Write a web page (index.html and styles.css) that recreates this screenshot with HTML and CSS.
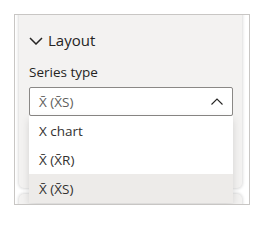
FILE: index.html
```html
<!DOCTYPE html>
<html lang="en">
<head>
    <meta charset="UTF-8">
    <meta name="viewport" content="width=device-width, initial-scale=1.0">
    <title>Format pane</title>
    <link rel="stylesheet" href="styles.css">
</head>
<body>

    <div class="frame">
        <div class="card">
            <div class="card-head">
                <svg class="chev-down" width="14" height="8" viewBox="0 0 14 8">
                    <path d="M1 1 L7 7 L13 1" fill="none" stroke="#252423" stroke-width="1.5"/>
                </svg>
                <span class="title">Layout</span>
            </div>
            <div class="label">Series type</div>
            <div class="select">
                <div class="select-box">
                    <span class="value">X&#772; (X&#772;S)</span>
                    <svg class="chev-up" width="12" height="7" viewBox="0 0 12 7">
                        <path d="M0.5 6.5 L6 1 L11.5 6.5" fill="none" stroke="#252423" stroke-width="1.1"/>
                    </svg>
                </div>
                <div class="options">
                    <div class="option">X chart</div>
                    <div class="option">X&#772; (X&#772;R)</div>
                    <div class="option selected">X&#772; (X&#772;S)</div>
                </div>
            </div>
        </div>
        <div class="card next"></div>
    </div>

</body>
</html>
```
FILE: styles.css
```css
body {
    margin: 0;
    padding: 0;
    background: #fff;
    font-family: "Open Sans", "Noto Sans", sans-serif;
    color: #252423;
}
.frame {
    margin: 14px;
    width: 234px;
    height: 189px;
    border: 1px solid #c8c6c4;
    overflow: hidden;
    background: #fff;
}
.card {
    margin: -8px 7px 0 4px;
    padding: 23px 9px 0 10px;
    height: 158px;
    background: #f3f2f1;
    border-radius: 0 0 5px 5px;
    box-shadow: 0 0 3px 1px rgba(0, 0, 0, 0.14);
}
.card.next {
    margin-top: 6px;
    padding: 0;
    height: 40px;
    border-radius: 5px;
}
.card-head {
    display: flex;
    align-items: center;
    height: 20px;
    gap: 5px;
}
.chev-down {
    margin-top: 1px;
}
.title {
    font-size: 15px;
    line-height: 20px;
}
.label {
    margin-top: 13px;
    font-size: 13.5px;
    line-height: 18px;
}
.select {
    position: relative;
    margin-top: 6px;
}
.select-box {
    display: flex;
    align-items: center;
    justify-content: space-between;
    height: 27px;
    padding: 0 9px 0 9px;
    border: 1px solid #8a8886;
    border-radius: 2px;
    background: #fff;
}
.value {
    font-size: 13.5px;
    line-height: 27px;
    padding-top: 2px;
    color: #605e5c;
}
.chev-up {
    margin-top: -1px;
}
.options {
    position: absolute;
    top: 29px;
    left: 0;
    right: 0;
    background: #fff;
    box-shadow: 0 3px 8px rgba(0, 0, 0, 0.13);
}
.option {
    height: 29px;
    padding: 1px 10px 0;
    box-sizing: border-box;
    font-size: 13.5px;
    line-height: 28px;
    color: #323130;
}
.option.selected {
    background: #edebe9;
}
```
